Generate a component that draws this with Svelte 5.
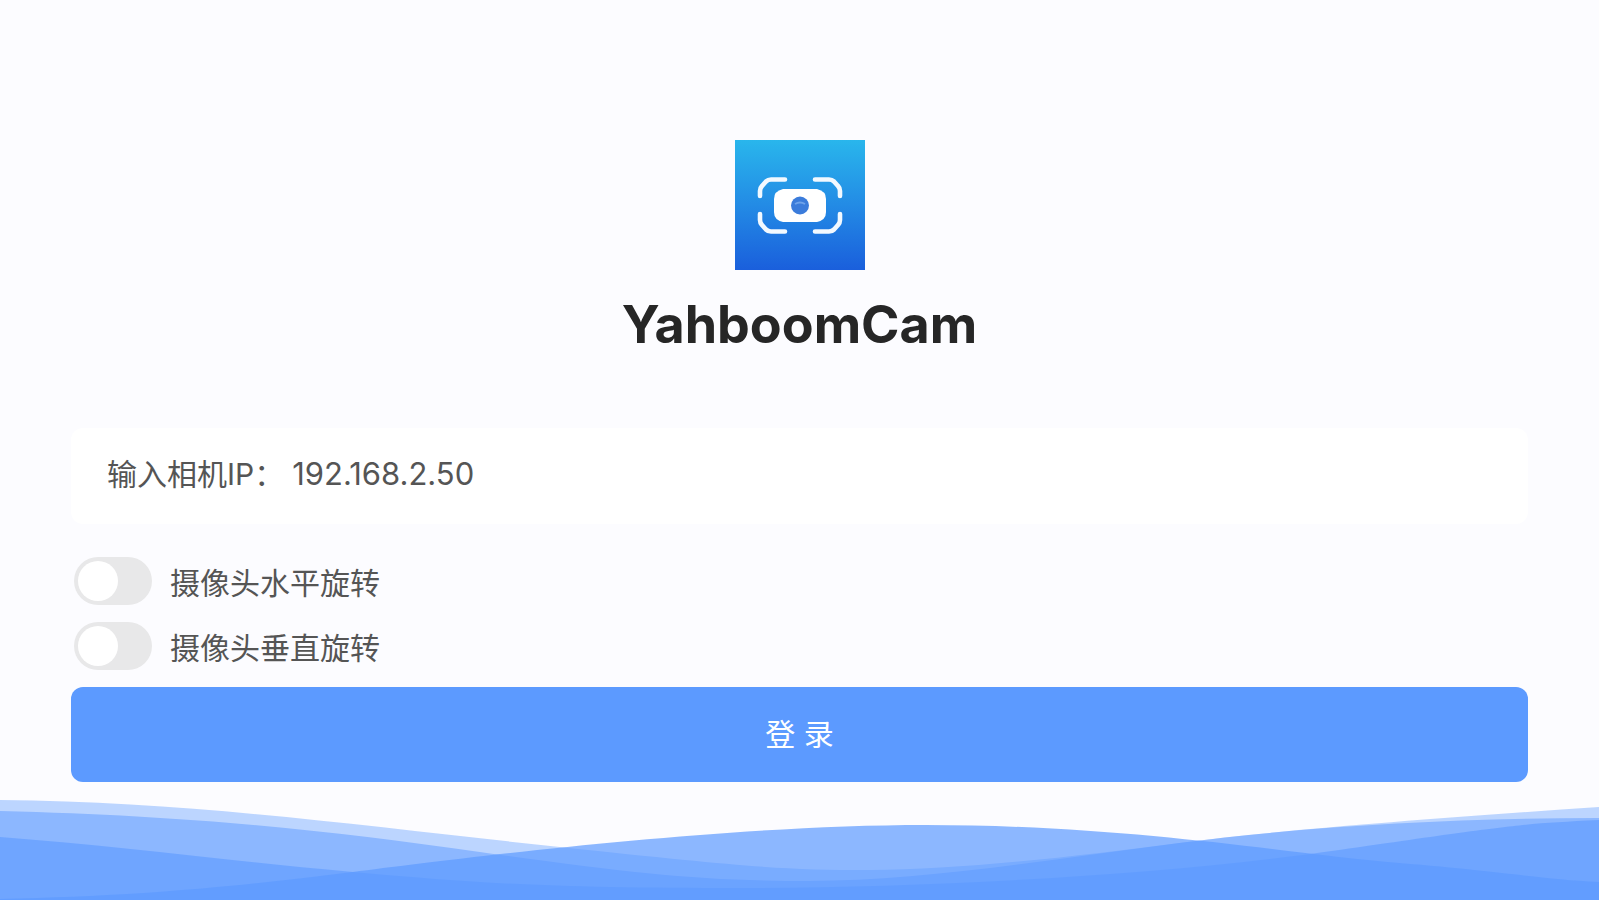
<script>
    let ip = $state("192.168.2.50");
    let options = $state([
        { id: "flip-h", label: "摄像头水平旋转", checked: false },
        { id: "flip-v", label: "摄像头垂直旋转", checked: false },
    ]);

    function login(event) {
        event.preventDefault();
    }
</script>

<div class="page">
    <header class="brand">
        <svg class="logo" viewBox="0 0 130 130" aria-hidden="true">
            <defs>
                <linearGradient id="logo-bg" x1="0" y1="0" x2="0" y2="1">
                    <stop offset="0" stop-color="#29b6ec" />
                    <stop offset="0.5" stop-color="#238be5" />
                    <stop offset="1" stop-color="#1a5fdc" />
                </linearGradient>
            </defs>
            <rect width="130" height="130" fill="url(#logo-bg)" />
            <g fill="none" stroke="#f2f9ff" stroke-width="4.6" stroke-linecap="round" stroke-linejoin="round">
                <path d="M50 39.5H36Q33 39.5 31 41.5L27 46Q25 48 25 51V56" />
                <path d="M80 39.5H94Q97 39.5 99 41.5L103 46Q105 48 105 51V56" />
                <path d="M25 74V80Q25 83 27 85L31 89.5Q33 91.5 36 91.5H50" />
                <path d="M105 74V80Q105 83 103 85L99 89.5Q97 91.5 94 91.5H80" />
            </g>
            <path d="M48 49H82Q91 51 91 59V72Q91 80 82 82H48Q39 80 39 72V59Q39 51 48 49Z" fill="#fff" />
            <circle cx="65" cy="65.5" r="9" fill="#3b7cdb" />
            <path d="M60 64Q65 61 70 64" fill="none" stroke="#6fa3ea" stroke-width="2" />
        </svg>
        <h1>YahboomCam</h1>
    </header>

    <form class="login" onsubmit={login}>
        <div class="field">
            <label for="ip">输入相机IP：</label>
            <input id="ip" type="text" bind:value={ip} />
        </div>

        {#each options as option (option.id)}
            <div class="option">
                <input id={option.id} class="switch" type="checkbox" bind:checked={option.checked} />
                <label for={option.id}>{option.label}</label>
            </div>
        {/each}

        <button type="submit">登 录</button>
    </form>

    <svg class="waves" viewBox="0 0 1600 100" preserveAspectRatio="none" aria-hidden="true">
        <path opacity="0.4" d="M0 0C200 2 380 28 560 47S780 70 870 70S1080 56 1180 43S1440 18 1600 7V100H0Z" />
        <path opacity="0.5" d="M0 11C200 16 330 31 480 52S700 81 810 81S1050 60 1180 43S1460 18 1600 18V100H0Z" />
        <path opacity="0.6" d="M0 37C120 46 220 60 353 72S560 88 740 88S1160 76 1340 50S1520 24 1600 20V100H0Z" />
        <path opacity="0.7" d="M0 99C150 96 250 85 353 72S720 25 926 25S1290 54 1400 63S1540 79 1600 82V100H0Z" />
    </svg>
</div>

<style>
    :global(body) {
        background: #fcfcff;
    }

    .page {
        box-sizing: border-box;
        display: flex;
        flex-direction: column;
        min-height: 100vh;
        padding-top: 140px;
        font-family: Inter, "Noto Sans CJK SC", sans-serif;
        font-size: 30px;
        color: #555;
    }

    .brand {
        display: flex;
        flex-direction: column;
        align-items: center;
        gap: 25px;
    }

    .logo {
        display: block;
        width: 130px;
        height: 130px;
    }

    h1 {
        margin: 0;
        font-size: 52px;
        line-height: 60px;
        font-weight: 700;
        color: #262626;
    }

    .login {
        display: flex;
        flex-direction: column;
        margin-top: 73px;
        padding: 0 71px;
    }

    .field {
        display: flex;
        align-items: baseline;
        gap: 8px;
        box-sizing: border-box;
        height: 96px;
        margin-bottom: 24px;
        padding: 0 36px;
        border-radius: 12px;
        background: #fff;
        line-height: 92px;
    }

    .field input {
        flex: 1;
        min-width: 0;
        height: 92px;
        padding: 0;
        border: 0;
        outline: none;
        background: transparent;
        font: inherit;
        font-size: 31px;
        color: inherit;
    }

    .option {
        display: flex;
        align-items: center;
        gap: 18px;
        height: 65px;
        padding-left: 3px;
    }

    .switch {
        appearance: none;
        flex: none;
        display: flex;
        align-items: center;
        box-sizing: border-box;
        width: 78px;
        height: 48px;
        margin: 0;
        padding: 4px;
        border-radius: 24px;
        background: #e8e8e9;
        cursor: pointer;
    }

    .switch::before {
        content: "";
        width: 40px;
        height: 40px;
        border-radius: 50%;
        background: #fff;
    }

    .switch:checked {
        justify-content: flex-end;
        background: #5c9aff;
    }

    button {
        height: 95px;
        margin-top: 9px;
        padding: 0 0 6px;
        border: 0;
        border-radius: 12px;
        background: #5c9aff;
        font: inherit;
        color: #fff;
        cursor: pointer;
    }

    .waves {
        display: block;
        width: 100%;
        height: 100px;
        margin-top: auto;
        fill: #5c9aff;
    }
</style>
